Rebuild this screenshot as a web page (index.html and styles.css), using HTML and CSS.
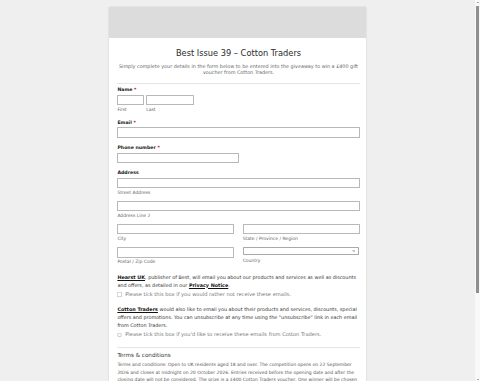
FILE: index.html
```html
<!DOCTYPE html>
<html lang="en">
<head>
    <meta charset="UTF-8">
    <meta name="viewport" content="width=device-width, initial-scale=1.0">
    <title>Best Issue 39 – Cotton Traders</title>
    <link rel="stylesheet" href="styles.css">
</head>
<body>

<div class="screen">
    <div class="page">
        <form class="card">
            <div class="card-header"></div>
            <div class="card-body">

                <div class="form-head">
                    <h1>Best Issue 39 – Cotton Traders</h1>
                    <p>Simply complete your details in the form below to be entered into the giveaway to win a £400 gift voucher from Cotton Traders.</p>
                </div>

                <div class="field">
                    <label class="label">Name <span class="req">*</span></label>
                    <div class="row name-row">
                        <div class="sub first">
                            <input class="input" type="text">
                            <span class="sublabel">First</span>
                        </div>
                        <div class="sub last">
                            <input class="input" type="text">
                            <span class="sublabel">Last</span>
                        </div>
                    </div>
                </div>

                <div class="field">
                    <label class="label">Email <span class="req">*</span></label>
                    <input class="input" type="email">
                </div>

                <div class="field">
                    <label class="label">Phone number <span class="req">*</span></label>
                    <input class="input half" type="tel">
                </div>

                <div class="field">
                    <label class="label">Address</label>
                    <div class="sub">
                        <input class="input" type="text">
                        <span class="sublabel">Street Address</span>
                    </div>
                    <div class="sub">
                        <input class="input" type="text">
                        <span class="sublabel">Address Line 2</span>
                    </div>
                    <div class="row two-col">
                        <div class="sub">
                            <input class="input" type="text">
                            <span class="sublabel">City</span>
                        </div>
                        <div class="sub">
                            <input class="input" type="text">
                            <span class="sublabel">State / Province / Region</span>
                        </div>
                    </div>
                    <div class="row two-col">
                        <div class="sub">
                            <input class="input" type="text">
                            <span class="sublabel">Postal / Zip Code</span>
                        </div>
                        <div class="sub">
                            <div class="select-box">
                                <select class="select"><option></option></select>
                                <svg class="chevron" viewBox="0 0 10 10" width="10" height="10">
                                    <path d="M2 3.5 L5 6.5 L8 3.5" fill="none" stroke="#333" stroke-width="1.8"/>
                                </svg>
                            </div>
                            <span class="sublabel under-select">Country</span>
                        </div>
                    </div>
                </div>

                <div class="consent">
                    <p><a href="#">Hearst UK</a>, publisher of Best, will email you about our products and services as well as discounts and offers, as detailed in our <a href="#">Privacy Notice</a>.</p>
                    <label class="check"><input type="checkbox"> Please tick this box if you would rather not receive these emails.</label>
                </div>

                <div class="consent">
                    <p><a href="#">Cotton Traders</a> would also like to email you about their products and services, discounts, special offers and promotions. You can unsubscribe at any time using the "unsubscribe" link in each email from Cotton Traders.</p>
                    <label class="check"><input type="checkbox"> Please tick this box if you'd like to receive these emails from Cotton Traders.</label>
                </div>

                <div class="terms">
                    <h2>Terms &amp; conditions</h2>
                    <p>Terms and conditions: Open to UK residents aged 18 and over. The competition opens on 22 September 2026 and closes at midnight on 20 October 2026. Entries received before the opening date and after the closing date will not be considered. The prize is a £400 Cotton Traders voucher. One winner will be chosen at random from all valid entries received.</p>
                </div>

            </div>
        </form>
    </div>

    <div class="scrollbar">
        <span class="arrow up"></span>
        <div class="track"><div class="thumb"></div></div>
        <span class="arrow down"></span>
    </div>
</div>

</body>
</html>
```

FILE: styles.css
```css
html {
    zoom: 0.375;
}

body {
    margin: 0;
    font-family: "DejaVu Sans", "Liberation Sans", sans-serif;
    background-color: #efefef;
    color: #555;
}

.screen {
    display: flex;
    height: 1016px;
    overflow: hidden;
}

.page {
    flex: 1;
    overflow: hidden;
    padding-top: 19px;
}

.card {
    width: 687px;
    margin: 0 auto;
    background-color: #fff;
    box-shadow: 0 0 4px rgba(0, 0, 0, 0.18);
}

.card-header {
    height: 82px;
    background-color: #dcdcdc;
}

.card-body {
    padding: 28px 18px 0 23px;
}

.form-head {
    text-align: center;
    border-bottom: 1px solid #e6e6e6;
    padding-bottom: 17px;
    margin-bottom: 10px;
}

.form-head h1 {
    margin: 0 0 8px;
    font-size: 22px;
    font-weight: normal;
    color: #2b2b2b;
    line-height: 30px;
}

.form-head p {
    margin: 0;
    font-size: 13px;
    line-height: 18px;
    color: #666;
}

.field {
    display: flex;
    flex-direction: column;
    margin-bottom: 19px;
}

.label {
    font-size: 12.5px;
    font-weight: bold;
    color: #222;
    line-height: 16px;
    margin-bottom: 5px;
}

.req {
    color: #c4001a;
}

.input {
    box-sizing: border-box;
    height: 27px;
    width: 100%;
    margin: 0;
    border: 1px solid #b8b8b8;
    border-radius: 1px;
    background-color: #fff;
    font: inherit;
}

.input.half {
    width: 323px;
}

.row {
    display: flex;
}

.name-row {
    gap: 5px;
}

.name-row .first {
    width: 72px;
}

.name-row .last {
    width: 126px;
}

.two-col {
    gap: 22px;
}

.two-col .sub {
    flex: 1;
}

.sub {
    display: flex;
    flex-direction: column;
}

.field > .sub,
.field > .row {
    margin-bottom: 16px;
}

.field > :last-child {
    margin-bottom: 0;
}

.sublabel {
    font-size: 12px;
    color: #666;
    line-height: 14px;
    margin-top: 5px;
}

.sublabel.under-select {
    margin-top: 9px;
}

.select-box {
    display: flex;
    align-items: center;
    height: 20px;
    box-sizing: border-box;
    border: 1px solid #a9a9a9;
    border-radius: 2px;
    padding-right: 6px;
    margin-right: 3px;
}

.select {
    flex: 1;
    appearance: none;
    border: none;
    background: none;
    height: 18px;
    font: inherit;
}

.chevron {
    display: block;
}

.consent {
    margin-bottom: 23px;
}

.field + .consent {
    padding-top: 5px;
}

.consent p {
    margin: 0 0 4px;
    font-size: 13px;
    line-height: 21px;
    color: #333;
}

.consent a {
    color: #111;
    font-weight: bold;
}

.check {
    display: flex;
    align-items: center;
    gap: 9px;
    font-size: 13.7px;
    color: #777;
    line-height: 18px;
}

.check input {
    width: 12px;
    height: 12px;
    margin: 0;
}

.terms {
    border-top: 1px solid #e6e6e6;
    padding-top: 12px;
}

.terms h2 {
    margin: 0 0 4px;
    font-size: 15px;
    font-weight: normal;
    color: #333;
    line-height: 20px;
}

.terms p {
    margin: 0;
    font-size: 12px;
    line-height: 20px;
    color: #555;
}

.scrollbar {
    width: 13px;
    display: flex;
    flex-direction: column;
    align-items: center;
    background-color: #f8f8f8;
}

.track {
    flex: 1;
    width: 100%;
    display: flex;
    justify-content: center;
    padding-top: 6px;
}

.thumb {
    width: 8px;
    height: 765px;
    background-color: #8f8f8f;
    border-radius: 1px;
}

.arrow {
    width: 0;
    height: 0;
    border-left: 4px solid transparent;
    border-right: 4px solid transparent;
    margin: 4px 0;
}

.arrow.up {
    border-bottom: 5px solid #555;
}

.arrow.down {
    border-top: 5px solid #555;
}
```
